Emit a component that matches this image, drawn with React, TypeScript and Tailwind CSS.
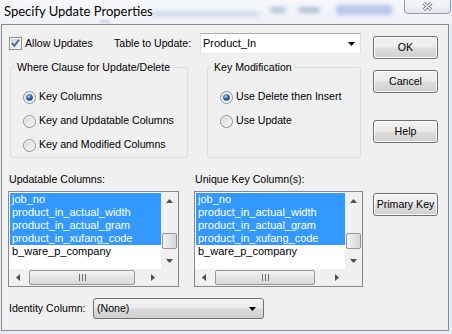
import React from "react";

const Tri = ({ dir, color = "#000" }: { dir: "up" | "down" | "left" | "right"; color?: string }) => {
  const pts = {
    up: "0,4 7,4 3.5,0",
    down: "0,0 7,0 3.5,4",
    left: "4,0 4,7 0,3.5",
    right: "0,0 0,7 4,3.5",
  }[dir];
  const vertical = dir === "up" || dir === "down";
  return (
    <svg width={vertical ? 7 : 4} height={vertical ? 4 : 7} className="block">
      <polygon points={pts} fill={color} />
    </svg>
  );
};

function Checkbox() {
  return (
    <svg width="13" height="13" className="block shrink-0">
      <defs>
        <linearGradient id="cbg" x1="0" y1="0" x2="1" y2="1">
          <stop offset="0" stopColor="#cbcfd5" />
          <stop offset="1" stopColor="#f6f6f6" />
        </linearGradient>
      </defs>
      <rect x="0.5" y="0.5" width="12" height="12" fill="#f4f4f4" stroke="#8e8f8f" />
      <rect x="2" y="2" width="9" height="9" fill="url(#cbg)" />
      <path d="M3 6.2 L5.3 8.8 L10 2.8" fill="none" stroke="#4a5f97" strokeWidth="1.8" />
    </svg>
  );
}

function Radio({ checked }: { checked?: boolean }) {
  return (
    <svg width="13" height="13" className="block shrink-0">
      <defs>
        <linearGradient id="rbg" x1="0" y1="0" x2="1" y2="1">
          <stop offset="0" stopColor="#d3d6da" />
          <stop offset="1" stopColor="#fbfbfb" />
        </linearGradient>
        <radialGradient id="rdot" cx="0.4" cy="0.35" r="0.7">
          <stop offset="0" stopColor="#b9e1fb" />
          <stop offset="0.45" stopColor="#2f77b5" />
          <stop offset="1" stopColor="#0d3561" />
        </radialGradient>
      </defs>
      <circle cx="6.5" cy="6.5" r="6" fill="#f6f6f6" stroke="#8e8f8f" />
      <circle cx="6.5" cy="6.5" r="4.6" fill="url(#rbg)" />
      {checked && <circle cx="6.5" cy="6.5" r="3.3" fill="url(#rdot)" />}
    </svg>
  );
}

function Button({ label, className = "" }: { label: string; className?: string }) {
  return (
    <div
      className={`flex h-[23px] w-[65px] items-center justify-center rounded-[3px] border border-[#707070] bg-[linear-gradient(180deg,#f2f2f2_0%,#ebebeb_48%,#dddddd_52%,#cfcfcf_100%)] shadow-[inset_0_0_0_1px_#fbfbfb] ${className}`}
    >
      {label}
    </div>
  );
}

function GroupBox({
  title,
  className = "",
  children,
}: {
  title: string;
  className?: string;
  children: React.ReactNode;
}) {
  return (
    <div className={`relative h-[91px] rounded-[3px] border border-[#d5dfe5] ${className}`}>
      <span className="absolute -top-[8px] left-[4px] bg-[#f0f0f0] px-[2px] leading-[14px]">{title}</span>
      <div className="flex flex-col gap-[10px] pt-[22px]">{children}</div>
    </div>
  );
}

function RadioRow({ label, checked }: { label: string; checked?: boolean }) {
  return (
    <div className="flex h-[14px] items-center pl-[12px]">
      <Radio checked={checked} />
      <span className="ml-[3px] whitespace-nowrap">{label}</span>
    </div>
  );
}

const rows = [
  "job_no",
  "product_in_actual_width",
  "product_in_actual_gram",
  "product_in_xufang_code",
  "b_ware_p_company",
];

function ListBox({ width, thumb }: { width: string; thumb: string }) {
  return (
    <div className={`mt-[5px] flex h-[96px] flex-col border border-[#828790] bg-white ${width}`}>
      <div className="flex h-[77px]">
        <div className="flex-1 overflow-hidden pl-[1px] pt-[1px] text-[11px]">
          {rows.map((r, i) => (
            <div
              key={r}
              className={`h-[13px] whitespace-nowrap pl-[2px] leading-[13px] ${
                i < 4 ? "bg-[#3399ff] text-white" : "text-black"
              }`}
            >
              {r}
            </div>
          ))}
        </div>
        <div className="flex w-[17px] flex-col bg-[#f0f0f0]">
          <div className="flex h-[17px] items-center justify-center">
            <Tri dir="up" color="#4d4d4d" />
          </div>
          <div className="flex-1 px-[1px]">
            <div className="mt-[24px] h-[16px] rounded-[2px] border border-[#979797] bg-[linear-gradient(90deg,#f3f3f3,#e4e4e4_50%,#d8d8d8)]" />
          </div>
          <div className="flex h-[17px] items-center justify-center">
            <Tri dir="down" color="#4d4d4d" />
          </div>
        </div>
      </div>
      <div className="flex h-[17px] bg-[#f0f0f0]">
        <div className="flex w-[17px] items-center justify-center">
          <Tri dir="left" color="#4d4d4d" />
        </div>
        <div className="flex-1 py-[1px]">
          <div
            className={`ml-[3px] flex h-full items-center justify-center rounded-[2px] border border-[#979797] bg-[linear-gradient(180deg,#f3f3f3,#e4e4e4_50%,#d8d8d8)] ${thumb}`}
          >
            <div className="flex gap-[2px]">
              <span className="h-[7px] w-px bg-[#6e6e6e]" />
              <span className="h-[7px] w-px bg-[#6e6e6e]" />
              <span className="h-[7px] w-px bg-[#6e6e6e]" />
            </div>
          </div>
        </div>
        <div className="flex w-[17px] items-center justify-center">
          <Tri dir="right" color="#4d4d4d" />
        </div>
        <div className="w-[17px] bg-[#f0f0f0]" />
      </div>
    </div>
  );
}

function TitleBar() {
  return (
    <div className="relative h-[24px] overflow-hidden bg-[linear-gradient(180deg,#f6f8fb,#edf2f8)]">
      <span className="absolute left-[150px] top-[12px] h-[4px] w-[110px] rounded-full bg-[#c6d4ea] blur-[2px]" />
      <span className="absolute left-[270px] top-[7px] h-[6px] w-[16px] rounded-full bg-[#b7c3d8] blur-[2px]" />
      <span className="absolute left-[298px] top-[7px] h-[6px] w-[22px] rounded-full bg-[#b2bfd6] blur-[2px]" />
      <span className="absolute left-[336px] top-[5px] h-[10px] w-[56px] rounded-[3px] bg-[#b9c6ef] blur-[2px]" />
      <span className="absolute left-[100px] top-[20px] h-[3px] w-[10px] rounded-full bg-[#c9d3e4] blur-[1px]" />
      <span className="relative block pl-[4px] pt-[1px] font-['Lato',sans-serif] text-[13px] leading-[20px] text-black [text-shadow:0_0_6px_#fff,0_0_3px_#fff]">
        Specify Update Properties
      </span>
      <div className="absolute right-[1px] top-[-1px] flex h-[15px] w-[47px] items-center justify-center rounded-b-[4px] border border-[#8f9cb0] bg-[linear-gradient(180deg,#f4f6f9,#e3e8ef)]">
        <svg width="11" height="9" className="block">
          <path d="M1.5 1 L9.5 8 M9.5 1 L1.5 8" stroke="#7a818c" strokeWidth="3.2" />
          <path d="M1.5 1 L9.5 8 M9.5 1 L1.5 8" stroke="#fafafa" strokeWidth="1.4" />
        </svg>
      </div>
    </div>
  );
}

export default function App() {
  return (
    <div className="h-[334px] w-[452px] overflow-hidden bg-[#e6edf6] font-['Liberation_Sans',Arial,sans-serif] text-[10.6px] text-black">
      <TitleBar />
      <div className="ml-[1px] flex h-[307px] w-[448px] border border-[#8a8a8a] bg-[#f0f0f0] pl-[6px] pt-[8px]">
        {/* left column */}
        <div className="w-[355px]">
          <div className="flex h-[21px] items-center">
            <div className="flex w-[106px] items-center pl-[1px]">
              <Checkbox />
              <span className="ml-[3px]">Allow Updates</span>
            </div>
            <span className="w-[86px]">Table to Update:</span>
            <div className="flex h-[21px] w-[161px] items-center border border-[#abadb3] border-x-[#dbdfe6] border-b-[#e3e9ef] bg-white pl-[2px] pr-[5px] text-[11px]">
              <span className="flex-1">Product_In</span>
              <Tri dir="down" />
            </div>
          </div>

          <div className="mt-[13px] flex">
            <GroupBox title="Where Clause for Update/Delete" className="ml-[2px] w-[178px]">
              <RadioRow label="Key Columns" checked />
              <RadioRow label="Key and Updatable Columns" />
              <RadioRow label="Key and Modified Columns" />
            </GroupBox>
            <GroupBox title="Key Modification" className="ml-[19px] w-[154px]">
              <RadioRow label="Use Delete then Insert" checked />
              <RadioRow label="Use Update" />
            </GroupBox>
          </div>

          <div className="mt-[15px] flex">
            <div className="w-[171px]">
              <div className="h-[13px] pl-[1px] leading-[13px]">Updatable Columns:</div>
              <ListBox width="w-[171px]" thumb="w-[106px]" />
            </div>
            <div className="ml-[15px] w-[169px]">
              <div className="h-[13px] pl-[1px] leading-[13px]">Unique Key Column(s):</div>
              <ListBox width="w-[169px]" thumb="w-[100px]" />
            </div>
          </div>

          <div className="mt-[11px] flex h-[21px] items-center">
            <span className="w-[85px] pl-[1px]">Identity Column:</span>
            <div className="flex h-[21px] w-[171px] items-center rounded-[3px] border border-[#707070] bg-[linear-gradient(180deg,#f2f2f2_0%,#ebebeb_48%,#dddddd_52%,#cfcfcf_100%)] pl-[3px] pr-[7px]">
              <span className="flex-1">(None)</span>
              <Tri dir="down" />
            </div>
          </div>
        </div>

        {/* right column */}
        <div className="ml-[10px] flex w-[65px] flex-col pt-[3px]">
          <Button label="OK" />
          <Button label="Cancel" className="mt-[11px]" />
          <Button label="Help" className="mt-[27px]" />
          <Button label="Primary Key" className="mt-[50px]" />
        </div>
      </div>
    </div>
  );
}
